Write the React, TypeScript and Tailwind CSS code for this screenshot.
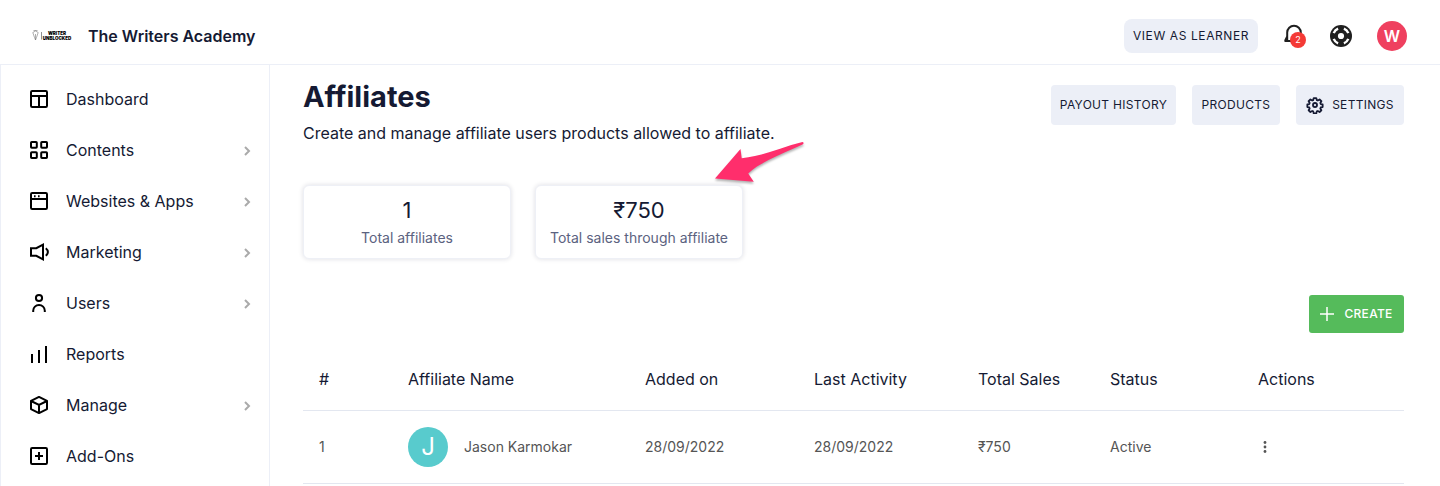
import type { ReactNode } from 'react';

type NavItem = {
    label: string;
    icon: ReactNode;
    expandable?: boolean;
};

type StatCardProps = {
    value: string;
    label: string;
    children?: ReactNode;
};

const navItems: NavItem[] = [
    {
        label: 'Dashboard',
        icon: (
            <>
                <rect x="4" y="4" width="16" height="16" rx="1.2" />
                <path d="M4 9h16M12 9v11" />
            </>
        ),
    },
    {
        label: 'Contents',
        expandable: true,
        icon: (
            <>
                <rect x="4" y="4" width="5.8" height="5.8" rx="0.8" />
                <rect x="14.2" y="4" width="5.8" height="5.8" rx="0.8" />
                <rect x="4" y="14.2" width="5.8" height="5.8" rx="0.8" />
                <rect x="14.2" y="14.2" width="5.8" height="5.8" rx="0.8" />
            </>
        ),
    },
    {
        label: 'Websites & Apps',
        expandable: true,
        icon: (
            <>
                <rect x="4" y="4" width="16" height="16" rx="1.2" />
                <path d="M4 10h16M7 7.2h1.6M11 7.2h1.6" />
            </>
        ),
    },
    {
        label: 'Marketing',
        expandable: true,
        icon: (
            <>
                <path d="M4 8.2h5.3L16 4.6v14.8l-6.7-3.6H4z" />
                <path d="M18.8 8.2c2.8 2.3 2.8 5.3 0 7.6" />
            </>
        ),
    },
    {
        label: 'Users',
        expandable: true,
        icon: (
            <>
                <circle cx="12" cy="7" r="3.1" />
                <path d="M6.2 21v-1.3a5.8 5.8 0 0 1 11.6 0V21" />
            </>
        ),
    },
    { label: 'Reports', icon: <path d="M5 12v9M12 8v13M19 4v17" /> },
    {
        label: 'Manage',
        expandable: true,
        icon: (
            <>
                <path d="M12 3.9l8 4v8.2l-8 4-8-4V7.9z" strokeLinejoin="round" />
                <path d="M4 8l8 4 8-4M12 12v8" />
            </>
        ),
    },
    {
        label: 'Add-Ons',
        icon: (
            <>
                <rect x="4" y="4" width="16" height="16" rx="1.2" />
                <path d="M8 12h8M12 8v8" />
            </>
        ),
    },
];

const columns = [
    { label: '#', width: 'w-[89px]' },
    { label: 'Affiliate Name', width: 'w-[237px]' },
    { label: 'Added on', width: 'w-[169px]' },
    { label: 'Last Activity', width: 'w-[164px]' },
    { label: 'Total Sales', width: 'w-[132px]' },
    { label: 'Status', width: 'w-[148px]' },
    { label: 'Actions', width: 'w-[162px]' },
];

const affiliates = [
    { id: 1, name: 'Jason Karmokar', added: '28/09/2022', active: '28/09/2022', sales: '₹750', status: 'Active' },
];

function Logo() {
    return (
        <svg viewBox="0 0 40 14" className="h-3.5 w-10" role="img" aria-label="Writer Unblocked">
            <path d="M1.5 1.5h4M.8 3.5l1.700 5 1 2.500 1-2.500 1.700-5-2.700-1.500zM3.500 5v6" fill="none" stroke="#777" strokeWidth="0.6" />
            <path d="M9.5 3v7.500" stroke="#444" strokeWidth="0.6" />
            <text x="25" y="5.5" textAnchor="middle" fontSize="4.5" fontWeight="900" fill="#000">
                WRITER
            </text>
            <text x="25" y="11" textAnchor="middle" fontSize="4.5" fontWeight="900" fill="#000">
                UNBLOCKED
            </text>
        </svg>
    );
}

function BellIcon() {
    return (
        <svg viewBox="0 0 24 24" className="size-6" fill="none" stroke="#1f1f1f" strokeWidth="2">
            <path d="M2.500 17H20M5.200 16V8.500a6.800 6.800 0 0 1 13.600 0V16M5.200 12.500 3 17" />
        </svg>
    );
}

function SupportIcon() {
    return (
        <svg viewBox="0 0 24 24" className="size-6">
            <circle cx="12" cy="12" r="11" fill="#1f1f1f" />
            <circle cx="12" cy="12" r="3.1" fill="#fff" />
            <g fill="none" stroke="#fff" strokeWidth="2.4">
                <path d="M14.9 4.7a7.9 7.9 0 0 1 4.4 4.4" />
                <path d="M19.3 14.9a7.9 7.9 0 0 1-4.4 4.4" />
                <path d="M9.1 19.3a7.9 7.9 0 0 1-4.4-4.4" />
                <path d="M4.7 9.1a7.9 7.9 0 0 1 4.400-4.400" />
            </g>
        </svg>
    );
}

function GearIcon() {
    return (
        <svg viewBox="0 0 24 24" className="size-[18px]" fill="none" stroke="currentColor" strokeWidth="2.4" strokeLinejoin="round">
            <circle cx="12" cy="12" r="2.7" />
            <path d="M10.3 2.8h3.4l.7 2.7 1.3.5 2.4-1.4 2.4 2.4-1.4 2.4.5 1.3 2.6.6v3.4l-2.6.6-.5 1.3 1.4 2.4-2.4 2.4-2.4-1.4-1.3.5-.7 2.7h-3.4l-.7-2.7-1.3-.5-2.4 1.4-2.4-2.4 1.4-2.4-.5-1.3-2.6-.6v-3.400l2.600-.6.5-1.300-1.400-2.400 2.400-2.400 2.400 1.400 1.300-.5z" />
        </svg>
    );
}

function ArrowMark() {
    return (
        <svg
            viewBox="0 0 96 48"
            className="pointer-events-none absolute -top-12 left-[176px] h-12 w-24 drop-shadow-[0_2px_1px_rgba(0,0,0,0.3)]"
            aria-hidden="true"
        >
            <path
                d="M3 40.5 28.5 11l1.200 9.200C50 18.500 70 9 90.500 4q2 .5.5 2.200C73 14.500 48 24 36.200 35.500l5.600 8.200z"
                fill="#ff2e6c"
            />
        </svg>
    );
}

function StatCard({ value, label, children }: StatCardProps) {
    return (
        <div className="relative flex h-[74px] w-[208px] flex-col items-center rounded-md border border-[#eef0f6] bg-white pt-2.5 shadow-[0_0_5px_rgba(20,20,60,0.14)]">
            <p className="text-[22px] leading-7">{value}</p>
            <p className="mt-1 text-sm whitespace-nowrap text-[#5b6280]">{label}</p>
            {children}
        </div>
    );
}

function Header() {
    return (
        <header className="flex h-[65px] items-center border-b border-[#eceff7] pt-2 pr-[33px] pb-px pl-8">
            <Logo />
            <p className="ml-4 text-base font-semibold">The Writers Academy</p>
            <div className="ml-auto flex items-center">
                <button className="h-[34px] w-[134px] rounded-lg bg-[#eceff7] text-xs tracking-wider whitespace-nowrap">
                    VIEW AS LEARNER
                </button>
                <button className="relative ml-6 size-6" aria-label="Notifications">
                    <BellIcon />
                    <span className="absolute top-2 left-2 flex size-4 items-center justify-center rounded-full bg-[#f43a36] text-[9px] text-white">
                        2
                    </span>
                </button>
                <button className="ml-[23px] size-6" aria-label="Help">
                    <SupportIcon />
                </button>
                <button className="ml-6 size-[30px] rounded-full bg-[#ef405f] text-base font-semibold text-white">W</button>
            </div>
        </header>
    );
}

function Sidebar() {
    return (
        <nav className="w-[270px] shrink-0 border-x border-[#eceff7] pt-2">
            {navItems.map((item) => (
                <a key={item.label} href="#" className="flex h-[51px] items-center pr-4 pl-[26px] text-base">
                    <svg viewBox="0 0 24 24" className="size-6" fill="none" stroke="#000" strokeWidth="2">
                        {item.icon}
                    </svg>
                    <span className="ml-[15px]">{item.label}</span>
                    {item.expandable && (
                        <svg viewBox="0 0 12 12" className="mt-0.5 ml-auto size-3" fill="none" stroke="#aaa" strokeWidth="2">
                            <path d="M4 2l4 4-4 4" />
                        </svg>
                    )}
                </a>
            ))}
        </nav>
    );
}

function AffiliateTable() {
    return (
        <table className="mt-4 w-full table-fixed text-left">
            <thead>
                <tr className="border-b border-[#e3e7f0]">
                    {columns.map((column) => (
                        <th key={column.label} className={`h-[61px] px-4 text-base font-normal ${column.width}`}>
                            {column.label}
                        </th>
                    ))}
                </tr>
            </thead>
            <tbody className="text-sm text-[#555]">
                {affiliates.map((affiliate) => (
                    <tr key={affiliate.id} className="border-b border-[#e3e7f0]">
                        <td className="h-[73px] px-4">{affiliate.id}</td>
                        <td className="px-4">
                            <div className="flex items-center gap-4">
                                <span className="flex size-10 items-center justify-center rounded-full bg-[#58cbcd] text-2xl text-white">
                                    {affiliate.name[0]}
                                </span>
                                {affiliate.name}
                            </div>
                        </td>
                        <td className="px-4">{affiliate.added}</td>
                        <td className="px-4">{affiliate.active}</td>
                        <td className="px-4">{affiliate.sales}</td>
                        <td className="px-4">{affiliate.status}</td>
                        <td className="px-4">
                            <button className="flex size-3.5 items-center justify-center" aria-label="Row actions">
                                <svg viewBox="0 0 4 14" className="h-3.5 w-1" fill="#555">
                                    <circle cx="2" cy="2.500" r="1.400" />
                                    <circle cx="2" cy="7" r="1.400" />
                                    <circle cx="2" cy="11.500" r="1.400" />
                                </svg>
                            </button>
                        </td>
                    </tr>
                ))}
            </tbody>
        </table>
    );
}

export default function App() {
    return (
        <div className="flex min-h-screen flex-col bg-white font-['Inter',sans-serif] text-[#151a33]">
            <Header />
            <div className="flex flex-1">
                <Sidebar />
                <main className="min-w-0 flex-1 pt-3 pr-9 pl-[33px]">
                    <div className="flex items-start justify-between">
                        <div>
                            <h1 className="text-[29px] leading-10 font-bold">Affiliates</h1>
                            <p className="mt-1 text-base">Create and manage affiliate users products allowed to affiliate.</p>
                        </div>
                        <div className="mt-2 flex gap-4 text-xs tracking-wide whitespace-nowrap">
                            <button className="h-10 w-[125px] rounded bg-[#eceff7]">PAYOUT HISTORY</button>
                            <button className="h-10 w-[88px] rounded bg-[#eceff7]">PRODUCTS</button>
                            <button className="flex h-10 w-[108px] items-center justify-center gap-2 rounded bg-[#eceff7]">
                                <GearIcon />
                                SETTINGS
                            </button>
                        </div>
                    </div>
                    <div className="mt-10 flex gap-6">
                        <StatCard value="1" label="Total affiliates" />
                        <StatCard value="₹750" label="Total sales through affiliate">
                            <ArrowMark />
                        </StatCard>
                    </div>
                    <div className="mt-9 flex justify-end">
                        <button className="flex h-[38px] w-[95px] items-center justify-center gap-2.5 rounded-[3px] bg-[#55bb5b] text-xs font-medium tracking-wide text-white">
                            <svg viewBox="0 0 14 14" className="size-3.5" fill="none" stroke="#fff" strokeWidth="1.5">
                                <path d="M7 0v14M0 7h14" />
                            </svg>
                            CREATE
                        </button>
                    </div>
                    <AffiliateTable />
                </main>
            </div>
        </div>
    );
}
